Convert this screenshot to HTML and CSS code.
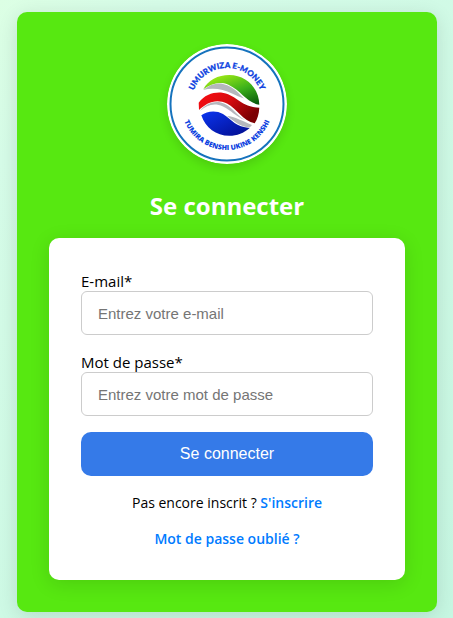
FILE: index.html
```
<!DOCTYPE html>
<html lang="fr">

<head>
    <meta charset="UTF-8">
    <meta name="viewport" content="width=device-width, initial-scale=1.0">
    <title>Se connecter</title>
    <link rel="stylesheet" href="styles.css">
</head>

<body>
    <main class="login-card">
        <svg class="logo" viewBox="0 0 120 120" role="img" aria-label="Umurwiza E-Money">
            <defs>
                <linearGradient id="green" x1="0.2" y1="0" x2="0.9" y2="1">
                    <stop offset="0" stop-color="#a4ee14" />
                    <stop offset="0.55" stop-color="#3bb01a" />
                    <stop offset="1" stop-color="#0a5a0c" />
                </linearGradient>
                <linearGradient id="red" x1="0" y1="0" x2="1" y2="0.5">
                    <stop offset="0" stop-color="#f90d12" />
                    <stop offset="0.5" stop-color="#d90b10" />
                    <stop offset="1" stop-color="#7c0003" />
                </linearGradient>
                <linearGradient id="blue" x1="0" y1="0" x2="1" y2="1">
                    <stop offset="0" stop-color="#0b35f0" />
                    <stop offset="1" stop-color="#020c8c" />
                </linearGradient>
                <path id="arc-top" d="M24 60 A36 36 0 0 1 96 60" />
                <path id="arc-bottom" d="M14 60 A46 46 0 0 0 106 60" />
            </defs>
            <circle cx="60" cy="60" r="60" fill="#fff" />
            <circle cx="60" cy="60" r="56.5" fill="none" stroke="#1673bd" stroke-width="2" />

            <path fill="url(#green)" d="M36.3 45.3 C41 36 51 31 62.3 31 C79 31 92 44 92.3 60.7 C79 58.5 75 47 61 40.5 C52 37 44 40 36.3 45.3Z" />
            <path fill="#b5b7bd" d="M36 46 C43 40.5 50 38.5 56 40 C68 43 73 51 77 54.5 C72 53 70 51.5 65 49.5 C56 45 46 43.5 36 46Z" />
            <path fill="url(#red)" d="M31.7 58.7 C37 51 46 48 54 48.5 C69 50 73 63 92.3 63.7 C92 70 90.5 75 87.7 79.3 C76 77 70 65 60 59.5 C49 54 39 59 32 66Z" />
            <path fill="#b5b7bd" d="M33 67 C39 60 46 57 54 58.5 C64 61 69 71 78 76 C69 73 64 66 56 62.5 C47 58.5 40 61 33 67Z" />
            <path fill="url(#blue)" d="M34.3 71.3 C40 67 49 66 56 70 C65 76 69 83 82.7 84 C77 89 70 91.8 62.3 91.8 C49 91.8 38.5 84 34.3 71.3Z" />
            <path fill="#b5b7bd" d="M60 72 C67 72 77 78 85 81 L82.7 83.5 C72 82.5 67 77 60 72Z" />

            <text class="logo-text-top"><textPath href="#arc-top" startOffset="50%">UMURWIZA E-MONEY</textPath></text>
            <text class="logo-text-bottom"><textPath href="#arc-bottom" startOffset="50%">TUMIRA BENSHI UKINE KENSHI</textPath></text>
        </svg>

        <h1 class="title">Se connecter</h1>

        <form class="login-form">
            <div class="field">
                <label for="email">E-mail*</label>
                <input type="email" id="email" placeholder="Entrez votre e-mail" required>
            </div>
            <div class="field">
                <label for="password">Mot de passe*</label>
                <input type="password" id="password" placeholder="Entrez votre mot de passe" required>
            </div>
            <button type="submit" class="submit">Se connecter</button>
            <p class="form-link">Pas encore inscrit ? <a href="#">S'inscrire</a></p>
            <p class="form-link"><a href="#">Mot de passe oublié ?</a></p>
        </form>
    </main>
</body>

</html>
```
FILE: styles.css
```
* {
    box-sizing: border-box;
}

body {
    margin: 0;
    min-height: 100vh;
    padding: 12px 16px 6px 17px;
    background: linear-gradient(135deg, #dcffe4, #d6fce8 15%, #c6f7e2);
    font-family: "Segoe UI", "Open Sans", "Noto Sans", sans-serif;
    font-size: 15px;
    line-height: 20px;
    color: #000;
}

.login-card {
    display: flex;
    flex-direction: column;
    align-items: center;
    max-width: 420px;
    margin: 0 auto;
    padding: 32px;
    border-radius: 10px;
    background-color: #57e811;
    box-shadow: 0 4px 20px rgba(0, 0, 0, 0.12);
}

/* logo */
.logo {
    width: 120px;
    height: 120px;
    border-radius: 50%;
    box-shadow: 0 4px 10px rgba(0, 0, 0, 0.12);
}

.logo-text-top,
.logo-text-bottom {
    font-weight: 900;
    fill: #0b3fe0;
    text-anchor: middle;
}

.logo-text-top {
    font-family: Lato, sans-serif;
    font-size: 8px;
    stroke: #0b3fe0;
    stroke-width: 0.3;
}

.logo-text-bottom {
    font-family: "Open Sans", sans-serif;
    font-size: 7px;
}

.title {
    margin: 23px 0 13px;
    font-size: 24px;
    font-weight: 700;
    line-height: 38px;
    color: #fff;
}

.login-form {
    width: 100%;
    padding: 33px 32px 31px;
    border-radius: 10px;
    background-color: #fff;
    box-shadow: 0 4px 20px rgba(0, 0, 0, 0.12);
}

.field {
    margin-bottom: 16px;
}

.field + .field {
    margin-top: 17px;
}

.field label {
    display: block;
    line-height: 20px;
}

.field input {
    display: block;
    width: 100%;
    height: 44px;
    padding: 0 16px;
    border: 1px solid #ccc;
    border-radius: 6px;
    background-color: #fff;
    font-family: Arial, "Liberation Sans", sans-serif;
    font-size: 15px;
}

.field input::placeholder {
    color: #757575;
}

.submit {
    display: block;
    width: 100%;
    height: 44px;
    margin-bottom: 17px;
    border: none;
    border-radius: 10px;
    background-color: #357ae8;
    color: #fff;
    font-family: Arial, "Liberation Sans", sans-serif;
    font-size: 16px;
    cursor: pointer;
}

.form-link {
    margin: 16px 0 0;
    font-size: 14px;
    text-align: center;
}

.form-link a {
    color: #007bff;
    font-weight: 600;
    text-decoration: none;
}
```
